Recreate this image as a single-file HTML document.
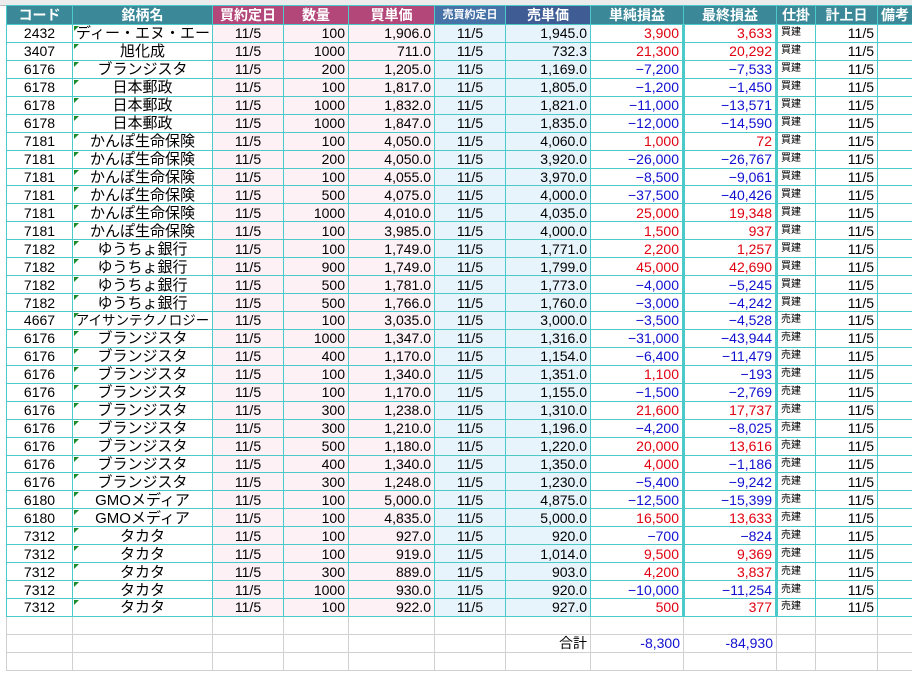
<!DOCTYPE html>
<html><head><meta charset="utf-8"><style>
body{margin:0;width:912px;height:682px;overflow:hidden;background:#fff;font-family:"Liberation Sans","Noto Sans CJK JP",sans-serif;}
#top{position:absolute;left:0;top:0;width:912px;height:5px;background:#ececec;border-bottom:1px solid #bbb;}
table{position:absolute;left:6px;top:5px;width:906px;border-collapse:collapse;table-layout:fixed;font-size:14px;}
td{height:16.95px;padding:0 3px;border:1px solid #4ccaca;white-space:nowrap;overflow:hidden;line-height:16px;text-align:center;color:#000}
tr.h td{height:18px;color:#fff;font-weight:bold;font-size:14px;}
.t{background:#3a8898}.m{background:#b4477a}.b{background:#4672a8}.b2{background:#3f5d94}
td.r{text-align:right}
td.p{background:#fdf1f5}td.s{background:#e8f4fc}
td.n{position:relative;font-size:15px}
td.n span{position:relative;top:1px}
td.n:before{content:"";position:absolute;left:1px;top:1px;border-left:5px solid #1a8a2a;border-bottom:5px solid transparent}
.red{color:#e00010!important}.blu{color:#1010d0!important}
td.k{font-size:10px;text-align:left}
td.tl{border-left:3px solid #4ccaca}
tr.e td{border:1px solid #d0d0d0;height:17px;background:#fff}
</style></head><body><div id="top"></div>
<table>
<colgroup><col style="width:66px"><col style="width:140px"><col style="width:71px"><col style="width:65px"><col style="width:86px"><col style="width:71px"><col style="width:85px"><col style="width:93px"><col style="width:93px"><col style="width:39px"><col style="width:62px"><col style="width:35px"></colgroup>
<tr class="h"><td class="t">コード</td><td class="t">銘柄名</td><td class="m">買約定日</td><td class="m">数量</td><td class="m">買単価</td><td class="b" style="font-size:11px">売買約定日</td><td class="b2">売単価</td><td class="t">単純損益</td><td class="t">最終損益</td><td class="t">仕掛</td><td class="t">計上日</td><td class="t">備考</td></tr>
<tbody id="tb"></tbody>
<tr class="e"><td></td><td></td><td></td><td></td><td></td><td></td><td></td><td></td><td></td><td></td><td></td><td></td></tr>
<tr class="e"><td></td><td></td><td></td><td></td><td></td><td></td><td class="r">合計</td><td class="r blu">-8,300</td><td class="r blu">-84,930</td><td></td><td></td><td></td></tr>
<tr class="e"><td></td><td></td><td></td><td></td><td></td><td></td><td></td><td></td><td></td><td></td><td></td><td></td></tr>
</table>
<script>
const d=`2432|ディー・エヌ・エー|100|1,906.0|1,945.0|3,900|3,633|買建
3407|旭化成|1000|711.0|732.3|21,300|20,292|買建
6176|ブランジスタ|200|1,205.0|1,169.0|-7,200|-7,533|買建
6178|日本郵政|100|1,817.0|1,805.0|-1,200|-1,450|買建
6178|日本郵政|1000|1,832.0|1,821.0|-11,000|-13,571|買建
6178|日本郵政|1000|1,847.0|1,835.0|-12,000|-14,590|買建
7181|かんぽ生命保険|100|4,050.0|4,060.0|1,000|72|買建
7181|かんぽ生命保険|200|4,050.0|3,920.0|-26,000|-26,767|買建
7181|かんぽ生命保険|100|4,055.0|3,970.0|-8,500|-9,061|買建
7181|かんぽ生命保険|500|4,075.0|4,000.0|-37,500|-40,426|買建
7181|かんぽ生命保険|1000|4,010.0|4,035.0|25,000|19,348|買建
7181|かんぽ生命保険|100|3,985.0|4,000.0|1,500|937|買建
7182|ゆうちょ銀行|100|1,749.0|1,771.0|2,200|1,257|買建
7182|ゆうちょ銀行|900|1,749.0|1,799.0|45,000|42,690|買建
7182|ゆうちょ銀行|500|1,781.0|1,773.0|-4,000|-5,245|買建
7182|ゆうちょ銀行|500|1,766.0|1,760.0|-3,000|-4,242|買建
4667|アイサンテクノロジー|100|3,035.0|3,000.0|-3,500|-4,528|売建
6176|ブランジスタ|1000|1,347.0|1,316.0|-31,000|-43,944|売建
6176|ブランジスタ|400|1,170.0|1,154.0|-6,400|-11,479|売建
6176|ブランジスタ|100|1,340.0|1,351.0|1,100|-193|売建
6176|ブランジスタ|100|1,170.0|1,155.0|-1,500|-2,769|売建
6176|ブランジスタ|300|1,238.0|1,310.0|21,600|17,737|売建
6176|ブランジスタ|300|1,210.0|1,196.0|-4,200|-8,025|売建
6176|ブランジスタ|500|1,180.0|1,220.0|20,000|13,616|売建
6176|ブランジスタ|400|1,340.0|1,350.0|4,000|-1,186|売建
6176|ブランジスタ|300|1,248.0|1,230.0|-5,400|-9,242|売建
6180|GMOメディア|100|5,000.0|4,875.0|-12,500|-15,399|売建
6180|GMOメディア|100|4,835.0|5,000.0|16,500|13,633|売建
7312|タカタ|100|927.0|920.0|-700|-824|売建
7312|タカタ|100|919.0|1,014.0|9,500|9,369|売建
7312|タカタ|300|889.0|903.0|4,200|3,837|売建
7312|タカタ|1000|930.0|920.0|-10,000|-11,254|売建
7312|タカタ|100|922.0|927.0|500|377|売建`;
let h='';
for(const l of d.split('\n')){const c=l.split('|');
const cl=v=>v.startsWith('-')?'blu':'red';const f=v=>v.replace('-','−');
const ns=c[1].length>9?' style="font-size:13.5px;padding-left:0;padding-right:0"':'';
h+=`<tr><td>${c[0]}</td><td class="n"${ns}><span>${c[1]}</span></td><td class="p">11/5</td><td class="p r">${c[2]}</td><td class="p r">${c[3]}</td><td class="s">11/5</td><td class="s r">${c[4]}</td><td class="r ${cl(c[5])}">${f(c[5])}</td><td class="r tl ${cl(c[6])}">${f(c[6])}</td><td class="k tl">${c[7]}</td><td class="r">11/5</td><td></td></tr>`;}
document.getElementById('tb').innerHTML=h;
</script>
</body></html>
